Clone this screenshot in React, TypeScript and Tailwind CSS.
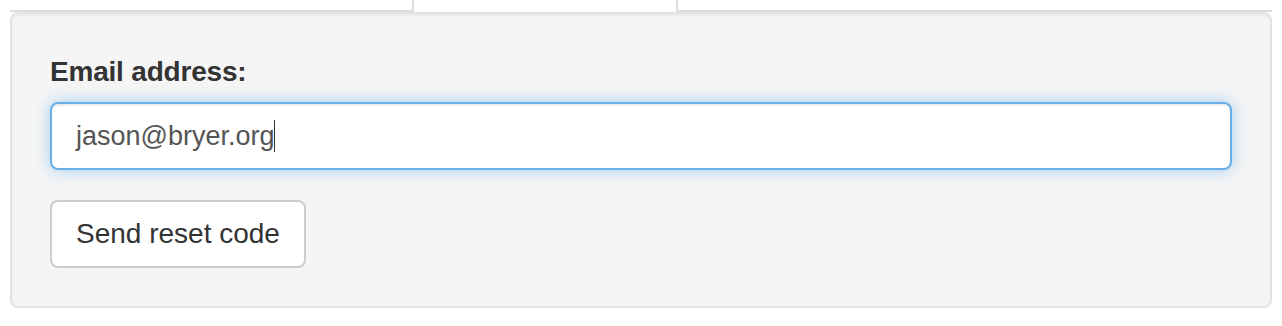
import React from 'react';

export default function App() {
  return (
    <div className="min-h-[326px] bg-white px-[10px] text-[#333]" style={{ fontFamily: '"Liberation Sans", Arial, sans-serif' }}>
      {/* Tabs (only bottom edge visible) */}
      <ul className="flex h-[12px] items-start border-b-2 border-[#ddd]">
        <li className="ml-[402px] h-[12px] w-[266px] border-x-2 border-[#ddd] bg-white" />
      </ul>

      {/* Well */}
      <div className="rounded-[8px] border-2 border-[#e3e3e3] bg-[#f5f5f5] p-[38px] shadow-[inset_0_2px_2px_rgba(0,0,0,0.05)]">
        <div className="mb-[30px]">
          <label className="mb-[10px] block text-[28px] font-bold leading-[40px] tracking-[-0.2px] text-[#333]">Email address:</label>
          <div className="flex h-[68px] items-center rounded-[8px] border-2 border-[#66afe9] bg-white px-[24px] text-[27px] text-[#555] shadow-[inset_0_2px_2px_rgba(0,0,0,0.075),0_0_16px_rgba(102,175,233,0.6)]">
            <span>jason@bryer.org</span>
            <span className="-ml-[1px] inline-block h-[32px] w-[1px] bg-[#333]" />
          </div>
        </div>
        <button className="h-[68px] rounded-[8px] border-2 border-[#ccc] bg-white px-[24px] text-[28px] leading-[40px] text-[#333]">
          Send reset code
        </button>
      </div>
    </div>
  );
}
